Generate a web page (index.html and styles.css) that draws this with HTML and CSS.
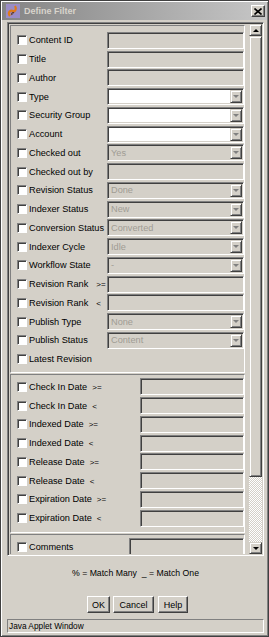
FILE: index.html
```html
<!DOCTYPE html>
<html>
<head>
  <title>Define Filter</title>
  <link rel="stylesheet" href="styles.css">
</head>
<body>
  <div class="window">
    <div class="titlebar">
      <svg class="app-icon" width="14" height="14" viewBox="0 0 14 14">
        <rect x="0" y="0" width="14" height="14" fill="#9a8cc6"/>
        <path d="M4 12 C1 8 5 6 7 7 C9 8 11 5 9 2" fill="none" stroke="#e07a18" stroke-width="2.2"/>
        <path d="M6 11 C5 9 7 8 8 9" fill="none" stroke="#5a3010" stroke-width="1.2"/>
      </svg>
      <span class="title">Define Filter</span>
      <span class="close">
        <svg width="8" height="7" viewBox="0 0 8 7">
          <path d="M0.5 0.5 L7.5 6.5 M7.5 0.5 L0.5 6.5" stroke="#000" stroke-width="1.6"/>
        </svg>
      </span>
    </div>

    <div class="content">
      <div class="pane">
        <div class="viewport">
          <div class="section first">
            <div class="row"><span class="check"></span><span class="label">Content ID</span><span class="field"></span></div>
            <div class="row"><span class="check"></span><span class="label">Title</span><span class="field"></span></div>
            <div class="row"><span class="check"></span><span class="label">Author</span><span class="field"></span></div>
            <div class="row"><span class="check"></span><span class="label">Type</span><span class="field white combo"><span class="value"></span><span class="drop"></span></span></div>
            <div class="row"><span class="check"></span><span class="label">Security Group</span><span class="field white combo"><span class="value"></span><span class="drop"></span></span></div>
            <div class="row"><span class="check"></span><span class="label">Account</span><span class="field white combo"><span class="value"></span><span class="drop"></span></span></div>
            <div class="row"><span class="check"></span><span class="label">Checked out</span><span class="field combo"><span class="value">Yes</span><span class="drop"></span></span></div>
            <div class="row"><span class="check"></span><span class="label">Checked out by</span><span class="field"></span></div>
            <div class="row"><span class="check"></span><span class="label">Revision Status</span><span class="field combo"><span class="value">Done</span><span class="drop"></span></span></div>
            <div class="row"><span class="check"></span><span class="label">Indexer Status</span><span class="field combo"><span class="value">New</span><span class="drop"></span></span></div>
            <div class="row"><span class="check"></span><span class="label">Conversion Status</span><span class="field combo"><span class="value">Converted</span><span class="drop"></span></span></div>
            <div class="row"><span class="check"></span><span class="label">Indexer Cycle</span><span class="field combo"><span class="value">Idle</span><span class="drop"></span></span></div>
            <div class="row"><span class="check"></span><span class="label">Workflow State</span><span class="field combo"><span class="value">-</span><span class="drop"></span></span></div>
            <div class="row"><span class="check"></span><span class="label">Revision Rank<span class="op wide">&gt;=</span></span><span class="field"></span></div>
            <div class="row"><span class="check"></span><span class="label">Revision Rank<span class="op wide">&lt;</span></span><span class="field"></span></div>
            <div class="row"><span class="check"></span><span class="label">Publish Type</span><span class="field combo"><span class="value">None</span><span class="drop"></span></span></div>
            <div class="row"><span class="check"></span><span class="label">Publish Status</span><span class="field combo"><span class="value">Content</span><span class="drop"></span></span></div>
            <div class="row"><span class="check"></span><span class="label">Latest Revision</span></div>
          </div>

          <div class="section dates">
            <div class="row"><span class="check"></span><span class="label">Check In Date<span class="op">&gt;=</span></span><span class="field"></span></div>
            <div class="row"><span class="check"></span><span class="label">Check In Date<span class="op">&lt;</span></span><span class="field"></span></div>
            <div class="row"><span class="check"></span><span class="label">Indexed Date<span class="op">&gt;=</span></span><span class="field"></span></div>
            <div class="row"><span class="check"></span><span class="label">Indexed Date<span class="op">&lt;</span></span><span class="field"></span></div>
            <div class="row"><span class="check"></span><span class="label">Release Date<span class="op">&gt;=</span></span><span class="field"></span></div>
            <div class="row"><span class="check"></span><span class="label">Release Date<span class="op">&lt;</span></span><span class="field"></span></div>
            <div class="row"><span class="check"></span><span class="label">Expiration Date<span class="op">&gt;=</span></span><span class="field"></span></div>
            <div class="row"><span class="check"></span><span class="label">Expiration Date<span class="op">&lt;</span></span><span class="field"></span></div>
          </div>

          <div class="section notes">
            <div class="row"><span class="check"></span><span class="label">Comments</span><span class="field"></span></div>
          </div>
        </div>

        <div class="scrollbar">
          <span class="sb-btn up"></span>
          <span class="thumb"></span>
          <span class="track"></span>
          <span class="sb-btn down"></span>
        </div>
      </div>

      <div class="hint">% = Match Many &nbsp;_ = Match One</div>

      <div class="buttons">
        <button class="btn ok">OK</button>
        <button class="btn cancel">Cancel</button>
        <button class="btn help">Help</button>
      </div>
    </div>

    <div class="status">Java Applet Window</div>
  </div>
</body>
</html>
```

FILE: styles.css
```css
body {
  margin: 0;
  background-color: #fff;
  font-family: "Liberation Sans", Arial, sans-serif;
}

.window {
  width: 269px;
  height: 637px;
  box-sizing: border-box;
  border: 1px solid #404040;
  padding: 1px;
  background-color: #d4d0c8;
  box-shadow: inset 1px 1px #fff, inset -1px -1px #808080;
  display: flex;
  flex-direction: column;
}

/* title bar */

.titlebar {
  height: 18px;
  flex: none;
  display: flex;
  align-items: center;
  background: linear-gradient(to right, #848484, #c6c6c6);
}

.app-icon {
  margin-left: 4px;
  flex: none;
}

.title {
  margin-left: 4px;
  font-size: 9px;
  font-weight: bold;
  color: #d8d4cc;
  flex: 1;
}

.close {
  width: 14px;
  height: 12px;
  margin-right: 2px;
  box-sizing: border-box;
  border: 1px solid;
  border-color: #fff #404040 #404040 #fff;
  box-shadow: inset -1px -1px #808080;
  background-color: #d4d0c8;
  display: flex;
  align-items: center;
  justify-content: center;
}

/* body */

.content {
  padding: 2px 3px 0 5px;
}

.pane {
  width: 257px;
  height: 534px;
  box-sizing: border-box;
  border: 1px solid;
  border-color: #808080 #fff #fff #808080;
  box-shadow: inset 1px 1px #404040, inset -1px -1px #d4d0c8;
  padding: 1px;
  display: flex;
}

.viewport {
  flex: 1;
  overflow: hidden;
  padding: 1px 0 0 1px;
}

.section {
  width: 235px;
  box-sizing: border-box;
  border: 1px solid;
  border-color: #808080 #fff #fff #808080;
  padding: 5px 0 3px 6px;
  margin-bottom: 1px;
}

.section.first .label {
  width: 78px;
}

.section.dates {
  padding-top: 3px;
  padding-bottom: 4px;
}

.section.dates .label {
  width: 111px;
}

.section.notes {
  padding-top: 3px;
}

.section.notes .label {
  width: 100px;
}

.row {
  display: flex;
  align-items: center;
  height: 18.75px;
}

.check {
  width: 10px;
  height: 10px;
  flex: none;
  box-sizing: border-box;
  border: 1px solid;
  border-color: #808080 #fff #fff #808080;
  box-shadow: inset 1px 1px #404040;
  background-color: #fff;
  margin-right: 2px;
}

.label {
  flex: none;
  font-size: 9.2px;
  color: #000;
  white-space: nowrap;
}

.op {
  margin-left: 5px;
  font-size: 8px;
}

.op.wide {
  margin-left: 8px;
}

.field {
  flex: 1;
  height: 17px;
  box-sizing: border-box;
  border: 1px solid;
  border-color: #808080 #fff #fff #808080;
  box-shadow: inset 1px 1px #404040, inset -1px -1px #d4d0c8;
  background-color: #d4d0c8;
  padding: 1px;
  display: flex;
  align-items: center;
}

.field.white {
  background-color: #fff;
}

.value {
  flex: 1;
  padding-left: 2px;
  font-size: 9.2px;
  color: #a09c94;
}

.drop {
  width: 12px;
  height: 13px;
  flex: none;
  box-sizing: border-box;
  border: 1px solid;
  border-color: #d4d0c8 #404040 #404040 #d4d0c8;
  box-shadow: inset 1px 1px #fff, inset -1px -1px #808080;
  background-color: #d4d0c8;
  display: flex;
  align-items: center;
  justify-content: center;
}

.drop:after {
  content: '';
  border-left: 3px solid transparent;
  border-right: 3px solid transparent;
  border-top: 3px solid #808080;
}

/* scrollbar */

.scrollbar {
  width: 13px;
  flex: none;
  display: flex;
  flex-direction: column;
}

.sb-btn,
.thumb {
  box-sizing: border-box;
  border: 1px solid;
  border-color: #d4d0c8 #404040 #404040 #d4d0c8;
  box-shadow: inset 1px 1px #fff, inset -1px -1px #808080;
  background-color: #d4d0c8;
}

.sb-btn {
  height: 12px;
  display: flex;
  align-items: center;
  justify-content: center;
}

.sb-btn.up:after {
  content: '';
  border-left: 3px solid transparent;
  border-right: 3px solid transparent;
  border-bottom: 3px solid #000;
}

.sb-btn.down:after {
  content: '';
  border-left: 3px solid transparent;
  border-right: 3px solid transparent;
  border-top: 3px solid #000;
}

.thumb {
  height: 441px;
}

.track {
  flex: 1;
  background: repeating-conic-gradient(#d4d0c8 0 25%, #fff 0 50%) 0 0 / 2px 2px;
}

/* footer */

.hint {
  margin-top: 11px;
  height: 12px;
  line-height: 12px;
  text-align: center;
  font-size: 8.7px;
  color: #000;
}

.buttons {
  margin-top: 17px;
  padding-left: 4px;
  display: flex;
  justify-content: center;
  gap: 3px;
}

.btn {
  height: 17px;
  box-sizing: border-box;
  border: 1px solid;
  border-color: #fff #404040 #404040 #fff;
  box-shadow: inset -1px -1px #808080;
  background-color: #d4d0c8;
  font-family: "Liberation Sans", Arial, sans-serif;
  font-size: 9px;
  color: #000;
  padding: 0;
}

.btn.ok {
  width: 23px;
}

.btn.cancel {
  width: 41px;
  margin-right: 1px;
}

.btn.help {
  width: 30px;
}

.status {
  margin: 6px 3px 0 5px;
  height: 14px;
  box-sizing: border-box;
  border: 1px solid;
  border-color: #808080 #fff #fff #808080;
  padding-left: 1px;
  line-height: 12px;
  font-size: 8.3px;
  color: #000;
}
```
